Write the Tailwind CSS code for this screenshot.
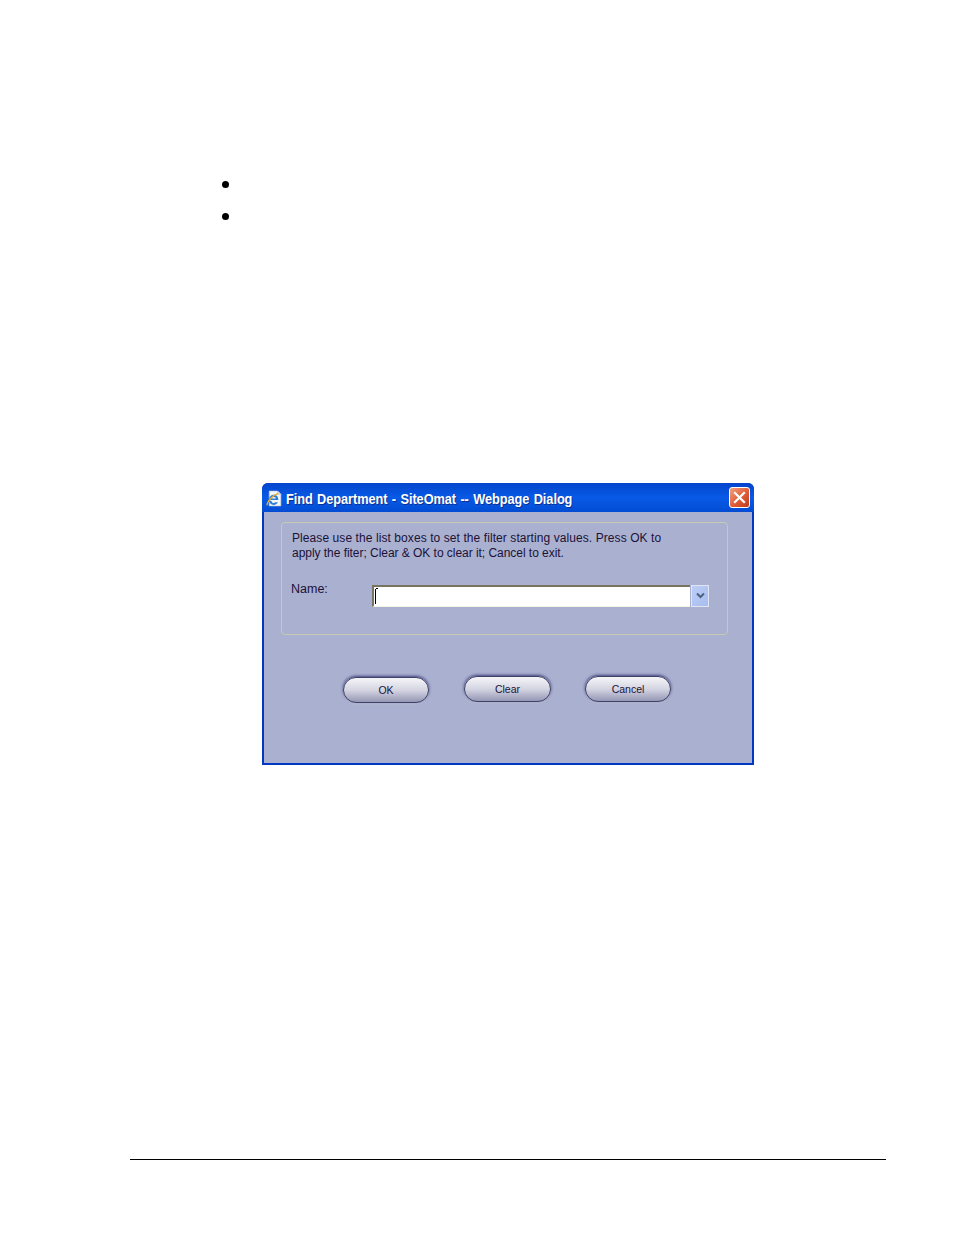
<!DOCTYPE html>
<html lang="en">
<head>
  <meta charset="UTF-8" />
  <title>Find Department</title>
  <script src="https://cdn.jsdelivr.net/npm/@tailwindcss/browser@4"></script>
</head>
<body class="bg-white font-['Liberation_Sans',Arial,sans-serif]">
  <div class="w-[954px] h-[1235px] overflow-hidden pt-[181px]">

    <!-- Bullets -->
    <div class="ml-[221.500px] flex flex-col gap-[25px]">
      <div class="w-[7px] h-[7px] rounded-full bg-black"></div>
      <div class="w-[7px] h-[7px] rounded-full bg-black"></div>
    </div>

    <!-- Dialog -->
    <div class="ml-[262px] mt-[263px] w-[492px] h-[282px] flex flex-col rounded-t-[6px] overflow-hidden bg-[#0038c4]">
      <!-- Title bar -->
      <div class="h-[29px] shrink-0 flex items-center pl-[4px] pr-[4px] bg-gradient-to-b from-[#0444cc] via-[#085ae6] to-[#034cd4]">
        <svg class="w-[17px] h-[17px] shrink-0 mt-[1px]" viewBox="0 0 16 16">
          <path d="M3 1h8l3 3v11H3z" fill="#f4f6fb" stroke="#b8c4dc" stroke-width="0.6" />
          <path d="M11 1v3h3" fill="#d8dfee" stroke="#9fb0cc" stroke-width="0.5" />
          <path d="M3 9.500h8.600c.2-3-1.700-5-4.200-5-2.600 0-4.600 2.100-4.600 4.900 0 2.700 1.900 4.600 4.500 4.600 1.800 0 3.200-.9 3.900-2.400H8.700c-.4.500-.9.700-1.400.7-1.100 0-1.900-.8-2-1.800zM5.300 8.100c.2-1 1-1.700 2-1.700s1.800.7 1.900 1.700z" fill="#2a7fd8" fill-rule="evenodd" />
          <path d="M1 14.500C.8 11.500 5.500 5.200 11.500 3.200" fill="none" stroke="#f0aa20" stroke-width="1.200" />
        </svg>
        <span class="ml-[3px] mt-[2px] origin-left scale-x-[0.91] whitespace-nowrap text-white font-bold text-[14px] leading-none tracking-[-0.05px] [word-spacing:1px] [text-shadow:1px_1px_0_#0a2f90]">Find Department - SiteOmat -- Webpage Dialog</span>
        <div class="ml-auto w-[21px] h-[21px] rounded-[3px] border border-white bg-gradient-to-br from-[#f0a080] via-[#e2613c] to-[#bd3a18] flex items-center justify-center">
          <svg class="w-[13px] h-[13px]" viewBox="0 0 13 13">
            <path d="M2 2l9 9M11 2l-9 9" stroke="#fff" stroke-width="2.200" stroke-linecap="square" />
          </svg>
        </div>
      </div>

      <!-- Body -->
      <div class="flex-1 mx-[2px] mb-[2px] bg-[#aab0cf] pt-[10px] pl-[17px]">
        <div class="w-[447px] h-[113px] border border-[#c6cab4] rounded-[4px] pt-[8px] pl-[10px] text-[12px] leading-[15px] text-[#1b1238]">
          <p class="tracking-[0.08px]">Please use the list boxes to set the filter starting values. Press OK to</p>
          <p class="tracking-[-0.04px]">apply the fiter; Clear &amp; OK to clear it; Cancel to exit.</p>
          <div class="mt-[24px] flex items-start">
            <span class="w-[81px] -ml-[1px] mt-[-3px] text-[12.500px]">Name:</span>
            <div class="w-[318px] h-[22px] bg-white border-t-2 border-l-2 border-t-[#77745f] border-l-[#77745f] border-b border-b-[#f4f4e6] flex items-center pl-[1px]">
              <span class="w-[1px] h-[15px] bg-black"></span>
              <span class="w-[2px] h-[1px] bg-black self-start mt-[1px]"></span>
            </div>
            <div class="ml-[1px] w-[18px] h-[22px] border border-[#dfe6f2] bg-gradient-to-br from-[#bccdf5] to-[#a8bdf0] flex items-center justify-center">
              <svg class="w-[11px] h-[8px]" viewBox="0 0 11 8">
                <path d="M2 1.500l3.500 3.500L9 1.500" fill="none" stroke="#4d6185" stroke-width="2" />
              </svg>
            </div>
          </div>
        </div>

        <!-- Buttons -->
        <div class="mt-[41px] ml-[62px] flex items-start text-[10.500px] text-[#1b1238]">
          <div class="mt-[1px] w-[86px] h-[26px] pt-[1px] rounded-[13px] border border-[#3f4166] bg-gradient-to-b from-[#f5f5f8] via-[#d5d5e2] to-[#9597b5] shadow-[0_-1px_3px_#3c3f7c,0_1px_2px_#c8cce0] flex items-center justify-center">OK</div>
          <div class="ml-[35px] w-[87px] h-[26px] pt-[1px] rounded-[13px] border border-[#3f4166] bg-gradient-to-b from-[#f5f5f8] via-[#d5d5e2] to-[#9597b5] shadow-[0_-1px_3px_#3c3f7c,0_1px_2px_#c8cce0] flex items-center justify-center">Clear</div>
          <div class="ml-[34px] w-[86px] h-[26px] pt-[1px] rounded-[13px] border border-[#3f4166] bg-gradient-to-b from-[#f5f5f8] via-[#d5d5e2] to-[#9597b5] shadow-[0_-1px_3px_#3c3f7c,0_1px_2px_#c8cce0] flex items-center justify-center">Cancel</div>
        </div>
      </div>
    </div>

    <!-- Footer rule -->
    <div class="ml-[130px] mt-[394px] w-[756px] h-[1px] bg-black"></div>
  </div>
</body>
</html>
